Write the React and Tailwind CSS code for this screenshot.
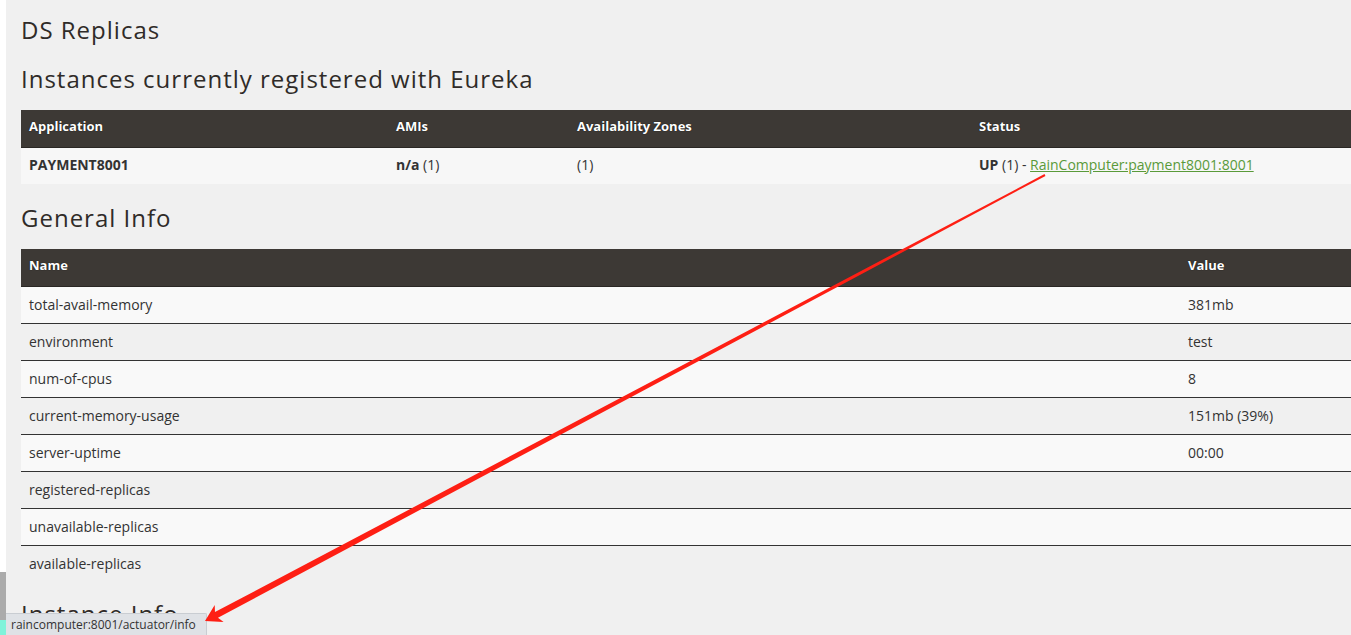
import React from "react";

const apps = [
  { name: "PAYMENT8001", amis: "n/a", amiCount: "(1)", zones: "(1)", status: "UP", statusCount: "(1)", link: "RainComputer:payment8001:8001" },
];

const generalInfo = [
  ["total-avail-memory", "381mb"],
  ["environment", "test"],
  ["num-of-cpus", "8"],
  ["current-memory-usage", "151mb (39%)"],
  ["server-uptime", "00:00"],
  ["registered-replicas", ""],
  ["unavailable-replicas", ""],
  ["available-replicas", ""],
];

const headingFont = { fontFamily: '"Open Sans", "DejaVu Sans", sans-serif' };

// red annotation arrow drawn over the page
const ArrowOverlay = () => (
  <svg className="absolute left-0 top-0 pointer-events-none" width="1351" height="635" viewBox="0 0 1351 635">
    <polygon
      points="205,621 223.6,621.9 217.98,617.73 1045.47,175.88 1044.53,174.12 214.98,612.07 214.7,605.1"
      fill="#fe1f14"
    />
  </svg>
);

export default function App() {
  return (
    <div className="relative w-[1351px] h-[635px] overflow-hidden flex bg-white" style={{ fontFamily: '"Open Sans", "Liberation Sans", sans-serif' }}>
      {/* strip of the window behind */}
      <div className="w-[6px] flex flex-col shrink-0">
        <div className="h-[572px] bg-white" />
        <div className="h-[48px] bg-[#ababab]" />
        <div className="flex-1 bg-[#7ff3da]" />
      </div>

      <div className="flex-1 bg-[#f0f0f0] pl-[15px] overflow-hidden">
        <div className="w-[1420px]">
          <h2 className="text-[24px] leading-[30px] font-medium tracking-[1px] text-[#2f2b28] pt-[15px] pb-[19px]" style={headingFont}>DS Replicas</h2>
          <h2 className="text-[24px] leading-[30px] font-medium tracking-[1px] text-[#2f2b28] pb-[16px]" style={headingFont}>Instances currently registered with Eureka</h2>

          <div className="text-[14px] text-[#333]">
            <div className="grid grid-cols-[367px_181px_402px_1fr] h-[38px] pb-[4px] items-center bg-[#3d3935] text-white text-[13px] font-bold border-b border-[#2a2724] [text-shadow:0_0_1px_#000]">
              <div className="px-2">Application</div>
              <div className="px-2">AMIs</div>
              <div className="px-2">Availability Zones</div>
              <div className="px-2">Status</div>
            </div>
            {apps.map((a) => (
              <div key={a.name} className="grid grid-cols-[367px_181px_402px_1fr] h-[36px] pb-[4px] items-center bg-[#f7f7f7]">
                <div className="px-2 font-bold">{a.name}</div>
                <div className="px-2"><b>{a.amis}</b> {a.amiCount}</div>
                <div className="px-2">{a.zones}</div>
                <div className="px-2">
                  <b>{a.status}</b> {a.statusCount} - <a href="#" className="text-[#5a9a3a] underline">{a.link}</a>
                </div>
              </div>
            ))}
          </div>

          <h2 className="text-[24px] leading-[30px] font-medium tracking-[1px] text-[#2f2b28] pt-[19px] pb-[16px]" style={headingFont}>General Info</h2>

          <div className="text-[14px] text-[#333]">
            <div className="grid grid-cols-[1159px_1fr] h-[38px] pb-[4px] items-center bg-[#3d3935] text-white text-[13px] font-bold border-b border-[#2a2724] [text-shadow:0_0_1px_#000]">
              <div className="px-2">Name</div>
              <div className="px-2">Value</div>
            </div>
            {generalInfo.map(([k, v], i) => (
              <div
                key={k}
                className={`grid grid-cols-[1159px_1fr] items-center pb-[2px] ${i === 0 ? "h-[36px]" : "h-[37px] border-t border-[#333]"} ${i % 2 === 0 ? "bg-[#f9f9f9]" : "bg-[#f0f0f0]"}`}
              >
                <div className="px-2">{k}</div>
                <div className="px-2">{v}</div>
              </div>
            ))}
          </div>

          <h2 className="text-[24px] leading-[30px] font-medium tracking-[1px] text-[#2f2b28] pt-[17px]" style={headingFont}>Instance Info</h2>
        </div>
      </div>

      {/* link preview status bar */}
      <div className="absolute left-[6px] bottom-0 h-[22px] w-[201px] bg-[#dfe2e6] border-t border-r border-[#c9cdd2] rounded-tr-[2px] text-[12px] leading-[21px] text-[#333] pl-[5px]">
        raincomputer:8001/actuator/info
      </div>

      <ArrowOverlay />
    </div>
  );
}
